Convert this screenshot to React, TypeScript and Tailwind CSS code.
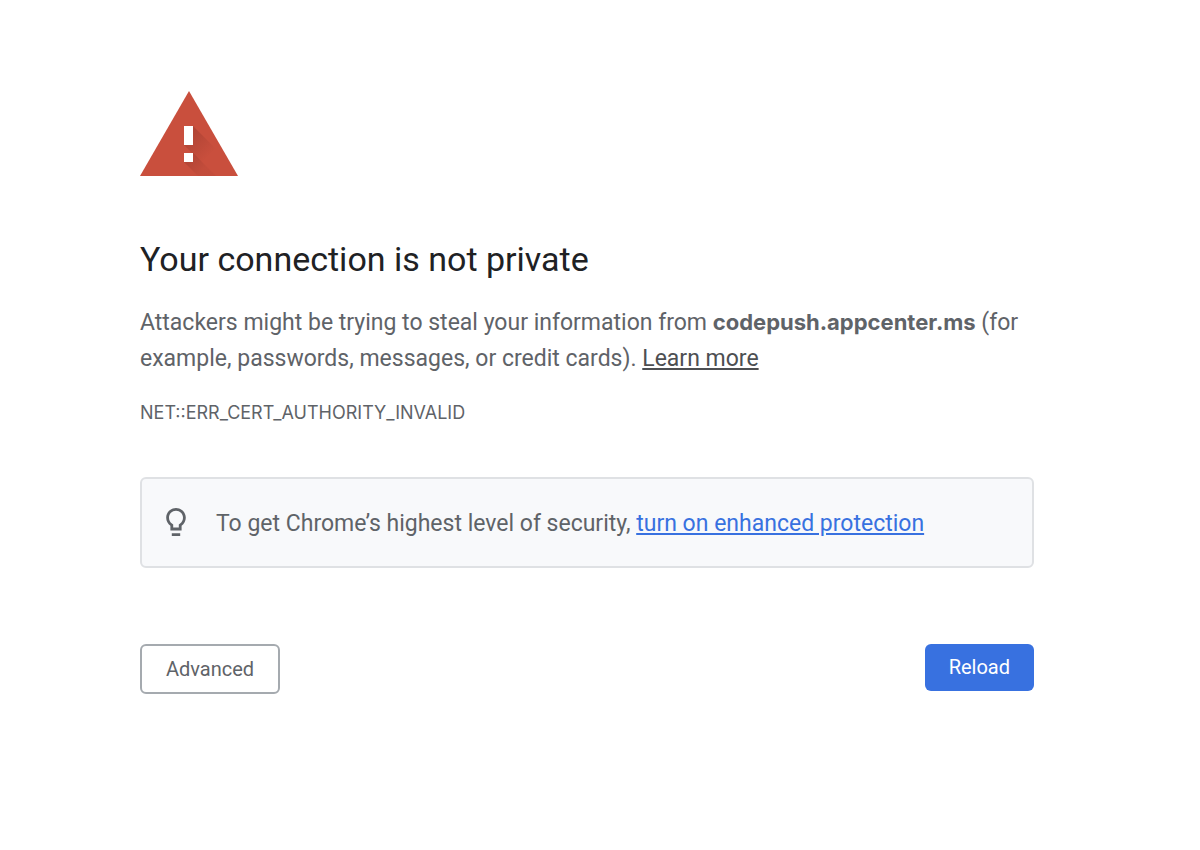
import type { ReactNode } from 'react';

function WarningIcon() {
  return (
    <svg width="98" height="85" viewBox="0 0 98 85" className="block" aria-hidden="true">
      <defs>
        <clipPath id="triangle">
          <path d="M49 0 98 85H0Z" />
        </clipPath>
        <linearGradient id="shadow" gradientUnits="userSpaceOnUse" x1="46" y1="44" x2="68" y2="66">
          <stop offset="0" stopColor="#8f352a" stopOpacity="0.45" />
          <stop offset="1" stopColor="#8f352a" stopOpacity="0" />
        </linearGradient>
        <linearGradient id="dotShadow" gradientUnits="userSpaceOnUse" x1="46" y1="64" x2="62" y2="80">
          <stop offset="0" stopColor="#8f352a" stopOpacity="0.45" />
          <stop offset="1" stopColor="#8f352a" stopOpacity="0.1" />
        </linearGradient>
      </defs>
      <path d="M49 0 98 85H0Z" fill="#c94f3d" />
      <g clipPath="url(#triangle)">
        <path d="M53 35 93 75V95H85L44 54Z" fill="url(#shadow)" />
        <path d="M53 62 83 92H65L44 71Z" fill="url(#dotShadow)" />
      </g>
      <path d="M44 35h9v19h-9zM44 62h9v9h-9z" fill="#fff" />
    </svg>
  );
}

function BulbIcon() {
  return (
    <svg width="20" height="28" viewBox="5 2 14 20" className="mb-1 block shrink-0" fill="#5f6368" aria-hidden="true">
      <path d="M9 20h6v2H9zM12 2C8.1 2 5 5.1 5 9c0 2.4 1.2 4.5 3 5.7V18h8v-3.3c1.8-1.3 3-3.4 3-5.7 0-3.9-3.1-7-7-7zm2.9 11.1-.9.6V16h-4v-2.3l-.9-.6C7.8 12.2 7 10.6 7 9c0-2.8 2.2-5 5-5s5 2.2 5 5c0 1.6-.8 3.2-2.1 4.1z" />
    </svg>
  );
}

function Tip({ children }: { children: ReactNode }) {
  return (
    <div className="flex items-center gap-[30px] rounded-md border-2 border-[#dfe1e4] bg-[#f8f9fb] px-6 pt-[27px] pb-[25px] leading-[35px]">
      <BulbIcon />
      <p>{children}</p>
    </div>
  );
}

export default function App() {
  return (
    <main className="min-h-screen bg-white pt-[91px] pr-[166px] pb-16 pl-[140px] font-['Roboto','Liberation_Sans',sans-serif] text-[23px] leading-9 text-[#5f6368]">
      <WarningIcon />

      <h1 className="mt-[62px] text-[34px] leading-[42px] text-[#202124]">Your connection is not private</h1>

      <p className="mt-6">
        Attackers might be trying to steal your information from{' '}
        <strong className="font-['Inter','Liberation_Sans',sans-serif] text-[22px] font-bold">codepush.appcenter.ms</strong> (for
        example, passwords, messages, or credit cards).{' '}
        <a href="#learn-more" className="text-[#4d4f52] underline">Learn more</a>
      </p>

      <p className="mt-6 font-['Inter','Liberation_Sans',sans-serif] text-lg leading-6">NET::ERR_CERT_AUTHORITY_INVALID</p>

      <div className="mt-[52px]">
        <Tip>
          To get Chrome’s highest level of security,{' '}
          <a href="#enhanced-protection" className="text-[#3871e0] underline">turn on enhanced protection</a>
        </Tip>
      </div>

      <div className="mt-[76px] flex items-start justify-between text-[20px]">
        <button type="button" className="rounded-md border-2 border-[#a5aaaf] bg-white px-6 py-3 leading-[22px]">
          Advanced
        </button>
        <button type="button" className="rounded-md bg-[#3871e0] px-6 py-3 leading-[23px] text-white">
          Reload
        </button>
      </div>
    </main>
  );
}
